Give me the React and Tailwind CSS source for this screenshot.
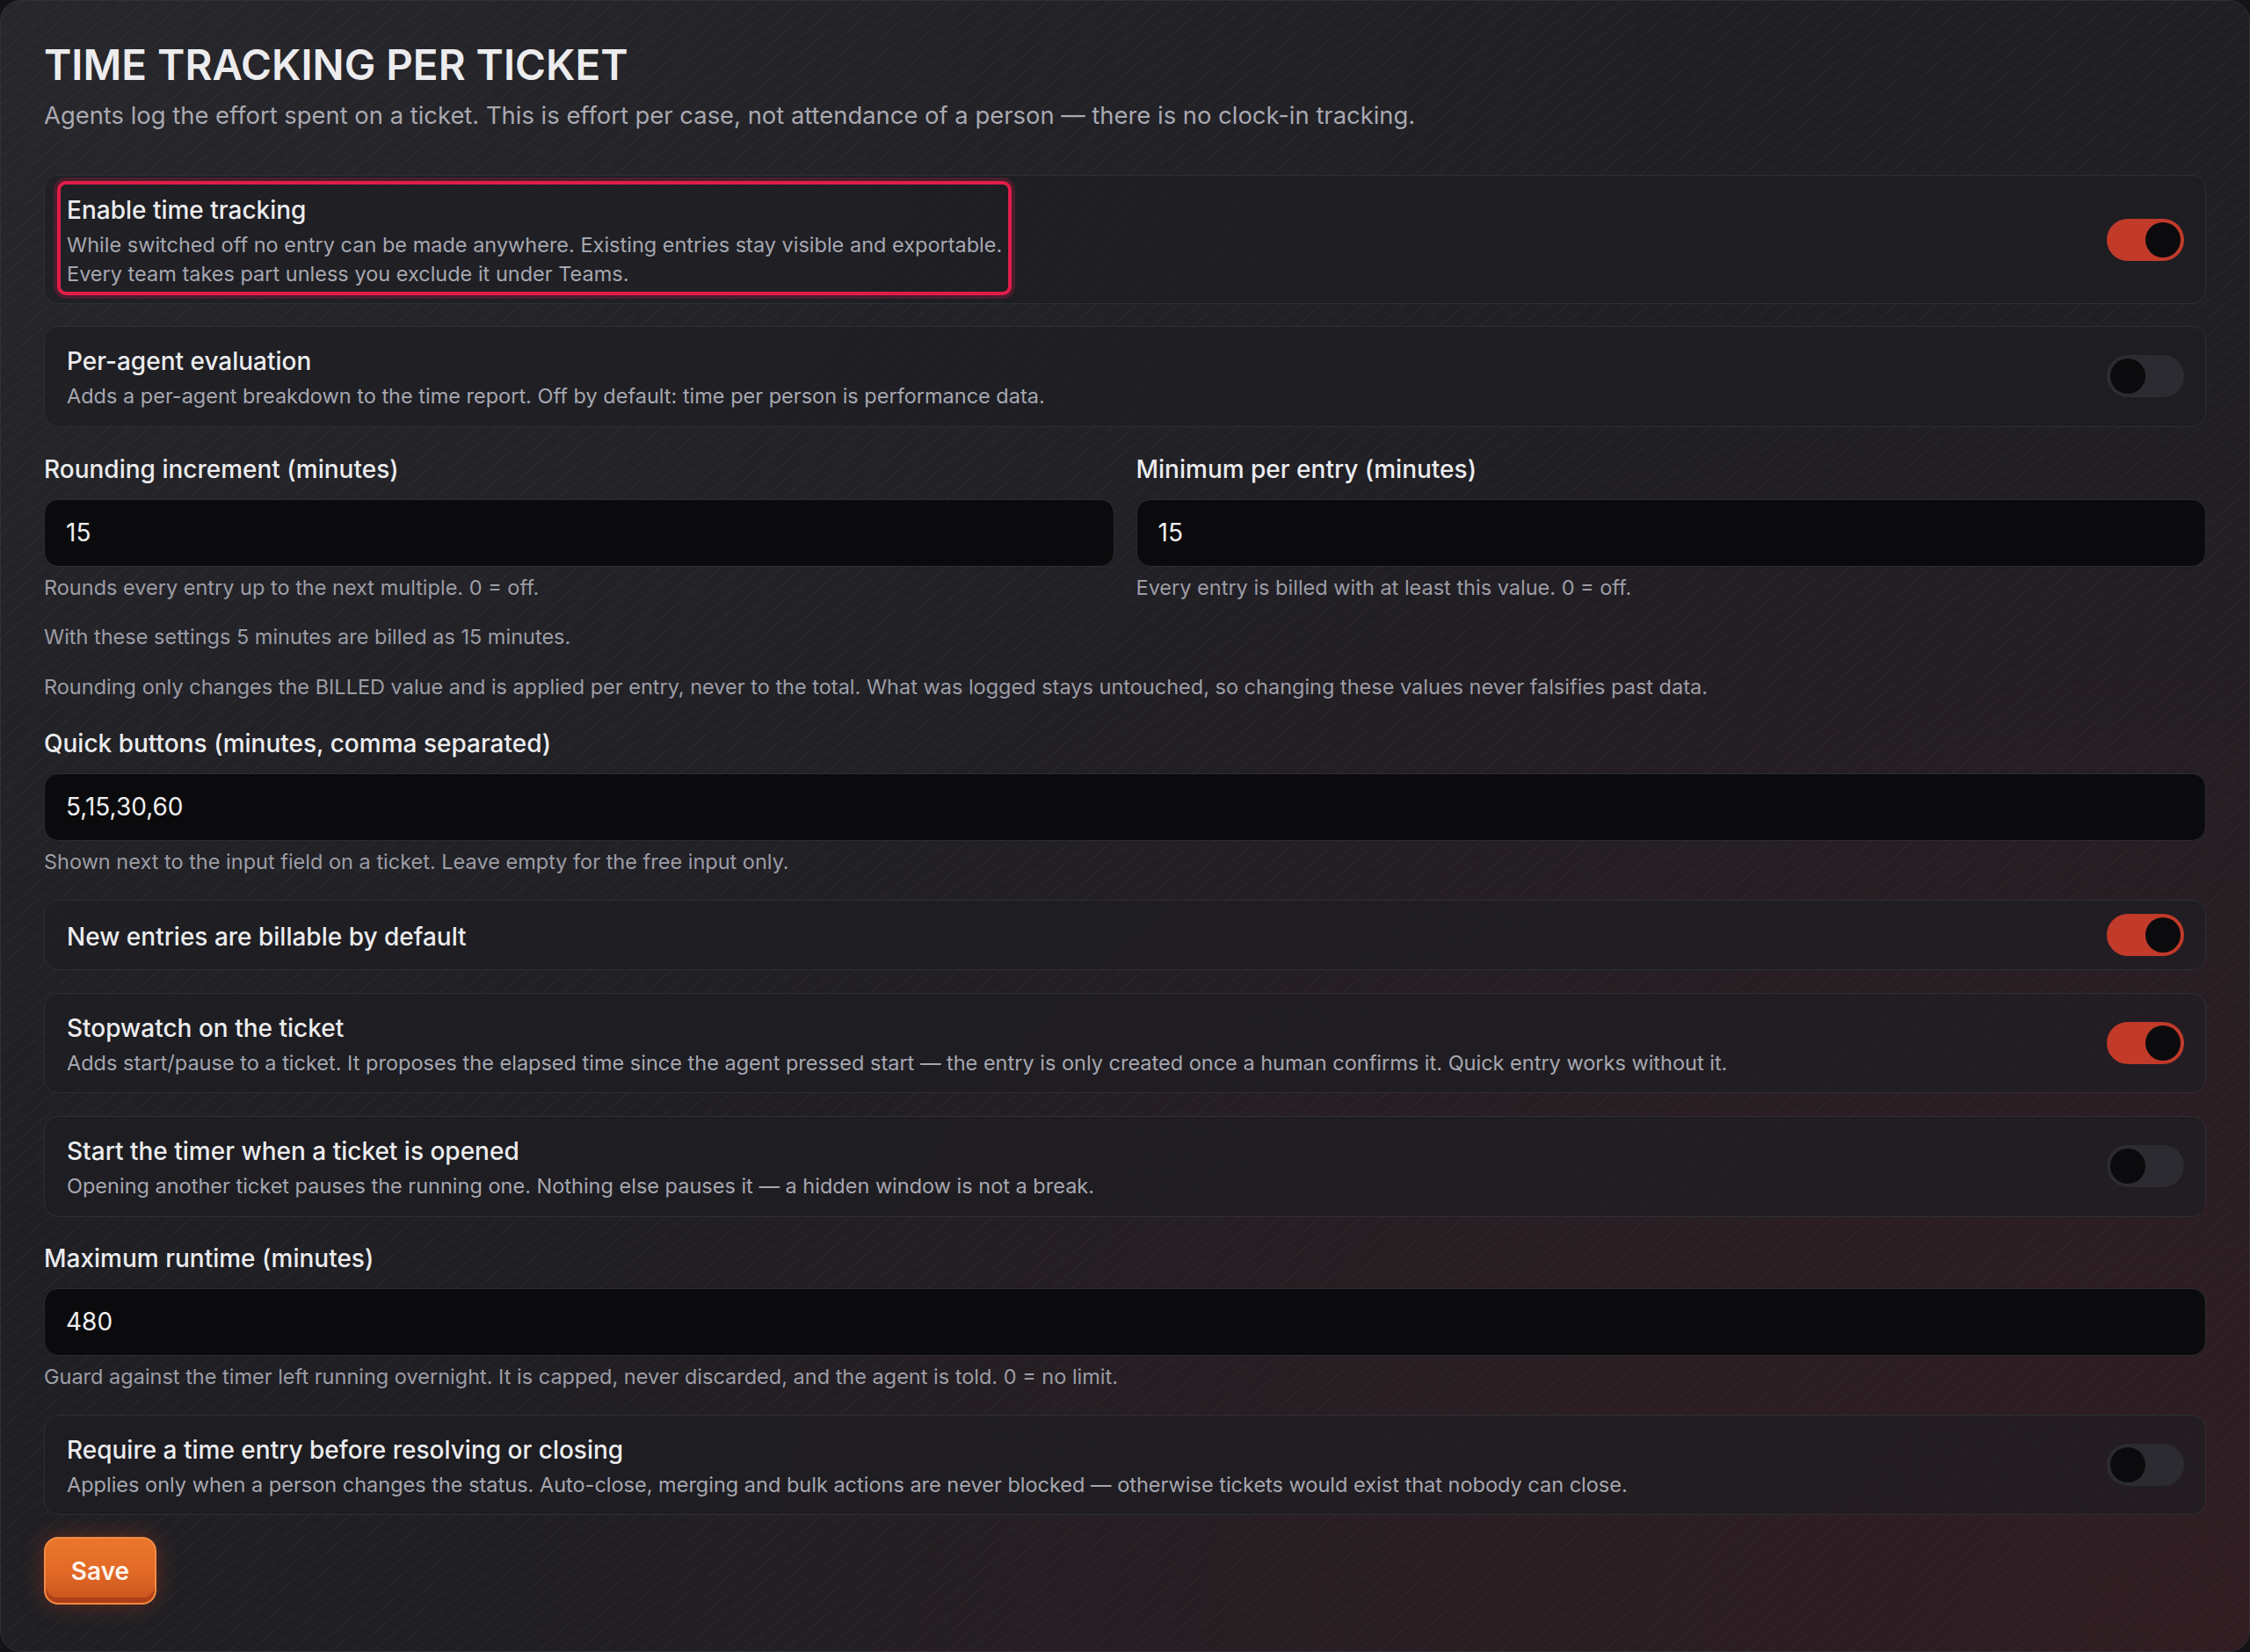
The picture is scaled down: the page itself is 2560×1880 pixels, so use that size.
import React, { useState } from 'react';

const FONT = "font-['Inter','Noto_Sans',sans-serif]";

const Toggle = ({ on, onChange }) => (
  <button
    type="button"
    role="switch"
    aria-checked={on}
    onClick={() => onChange(!on)}
    className={`relative shrink-0 w-[88px] h-[48px] rounded-full transition-colors ${
      on ? 'bg-[#c13a2a]' : 'bg-[#2b2b31]'
    }`}
  >
    <span
      className={`absolute top-[4px] w-[40px] h-[40px] rounded-full bg-[#0b0b0d] transition-all ${
        on ? 'left-[44px]' : 'left-[4px]'
      }`}
    />
  </button>
);

const SettingCard = ({ title, description, on, onChange, highlight, className = '' }) => {
  const text = (
    <div className="flex flex-col gap-[6px]">
      <div className="text-[28px] leading-[36px] font-medium text-[#ececee]">{title}</div>
      {description && (
        <div className="text-[23.5px] leading-[32.5px] text-[#a6a7b0]">{description}</div>
      )}
    </div>
  );

  return (
    <div
      className={`flex items-center justify-between gap-8 rounded-[16px] border-[1.5px] border-[#2e2e35] bg-[#1c1c21]/60 pl-[25px] pr-[24px] py-[15px] ${className}`}
    >
      <div className="mt-[6px] mb-[2px]">
        {highlight ? (
          // highlighted block: outline drawn around the text without moving it
          <div className="-mx-[11px] -mt-[15.5px] -mb-[7.5px] rounded-[10px] border-[4px] border-[#e11d48] px-[7px] pt-[11.5px] pb-[3.5px] shadow-[0_0_0_4px_rgba(225,29,72,0.22)]">
            {text}
          </div>
        ) : (
          text
        )}
      </div>
      <Toggle on={on} onChange={onChange} />
    </div>
  );
};

const Hint = ({ children, className = '' }) => (
  <p className={`text-[23.5px] leading-[32px] text-[#9d9da6] ${className}`}>{children}</p>
);

const Field = ({ label, value, onChange, hint, className = '' }) => (
  <div className={`flex flex-col ${className}`}>
    <label className="text-[28px] leading-[36px] font-medium text-[#ececee]">{label}</label>
    <input
      value={value}
      onChange={(e) => onChange(e.target.value)}
      className={`${FONT} mt-[16px] h-[77px] w-full rounded-[16px] border-[1.5px] border-[#2c2c33] bg-[#0b0b0d] px-[24px] text-[28px] text-[#f0f0f2] outline-none`}
    />
    {hint && <Hint className="mt-[8px]">{hint}</Hint>}
  </div>
);

export default function App() {
  const [settings, setSettings] = useState({
    enabled: true,
    perAgent: false,
    rounding: '15',
    minimum: '15',
    quick: '5,15,30,60',
    billable: true,
    stopwatch: true,
    autoStart: false,
    maxRuntime: '480',
    requireEntry: false,
  });

  const set = (key) => (value) => setSettings((s) => ({ ...s, [key]: value }));

  return (
    <div className={`${FONT} h-[1880px] w-full bg-[#141417] antialiased`}>
      <div className="h-full w-full overflow-hidden rounded-[24px] border-[1.5px] border-[#303036] bg-[#1f1f24] bg-[image:radial-gradient(ellipse_at_100%_100%,rgba(100,24,28,0.26)_0%,transparent_60%),radial-gradient(ellipse_at_0%_0%,rgba(255,255,255,0.035)_0%,transparent_55%),repeating-linear-gradient(140deg,rgba(255,255,255,0.028)_0px,rgba(255,255,255,0.028)_1.5px,transparent_1.5px,transparent_15px)] px-[49px] pt-[43px]">
        <h1 className="text-[47.5px] leading-[60px] font-semibold uppercase text-[#ececee]">
          Time tracking per ticket
        </h1>
        <p className="mt-[9px] text-[27.4px] leading-[36px] text-[#a9a9b1]">
          Agents log the effort spent on a ticket. This is effort per case, not attendance of a person — there is no clock-in tracking.
        </p>

        <div className="mt-[50px] flex flex-col">
          <SettingCard
            highlight
            title="Enable time tracking"
            description={
              <>
                While switched off no entry can be made anywhere. Existing entries stay visible and exportable.
                <br />
                Every team takes part unless you exclude it under Teams.
              </>
            }
            on={settings.enabled}
            onChange={set('enabled')}
          />
          <SettingCard
            className="mt-[25px]"
            title="Per-agent evaluation"
            description="Adds a per-agent breakdown to the time report. Off by default: time per person is performance data."
            on={settings.perAgent}
            onChange={set('perAgent')}
          />

          <div className="mt-[30px] grid grid-cols-2 gap-[25px]">
            <Field
              label="Rounding increment (minutes)"
              value={settings.rounding}
              onChange={set('rounding')}
              hint="Rounds every entry up to the next multiple. 0 = off."
            />
            <Field
              label="Minimum per entry (minutes)"
              value={settings.minimum}
              onChange={set('minimum')}
              hint="Every entry is billed with at least this value. 0 = off."
            />
          </div>
          <Hint className="mt-[24px]">With these settings 5 minutes are billed as 15 minutes.</Hint>
          <Hint className="mt-[25px]">
            Rounding only changes the BILLED value and is applied per entry, never to the total. What was logged stays untouched, so changing these values never falsifies past data.
          </Hint>

          <Field
            className="mt-[30px]"
            label="Quick buttons (minutes, comma separated)"
            value={settings.quick}
            onChange={set('quick')}
            hint="Shown next to the input field on a ticket. Leave empty for the free input only."
          />

          <SettingCard
            className="mt-[27px]"
            title="New entries are billable by default"
            on={settings.billable}
            onChange={set('billable')}
          />
          <SettingCard
            className="mt-[26px]"
            title="Stopwatch on the ticket"
            description="Adds start/pause to a ticket. It proposes the elapsed time since the agent pressed start — the entry is only created once a human confirms it. Quick entry works without it."
            on={settings.stopwatch}
            onChange={set('stopwatch')}
          />
          <SettingCard
            className="mt-[26px]"
            title="Start the timer when a ticket is opened"
            description="Opening another ticket pauses the running one. Nothing else pauses it — a hidden window is not a break."
            on={settings.autoStart}
            onChange={set('autoStart')}
          />

          <Field
            className="mt-[29px]"
            label="Maximum runtime (minutes)"
            value={settings.maxRuntime}
            onChange={set('maxRuntime')}
            hint="Guard against the timer left running overnight. It is capped, never discarded, and the agent is told. 0 = no limit."
          />

          <SettingCard
            className="mt-[27px]"
            title="Require a time entry before resolving or closing"
            description="Applies only when a person changes the status. Auto-close, merging and bulk actions are never blocked — otherwise tickets would exist that nobody can close."
            on={settings.requireEntry}
            onChange={set('requireEntry')}
          />

          <div className="mt-[25px]">
            <button
              type="button"
              className="h-[77px] w-[128px] rounded-[16px] border-[2px] border-[#f28b45] bg-gradient-to-b from-[#ea762b] via-[#e26a26] to-[#c9521f] text-[28px] font-semibold text-[#fff4ec] shadow-[inset_0_-6px_0_rgba(120,30,10,0.35),0_0_28px_rgba(220,70,30,0.35)]"
            >
              Save
            </button>
          </div>
        </div>
      </div>
    </div>
  );
}
